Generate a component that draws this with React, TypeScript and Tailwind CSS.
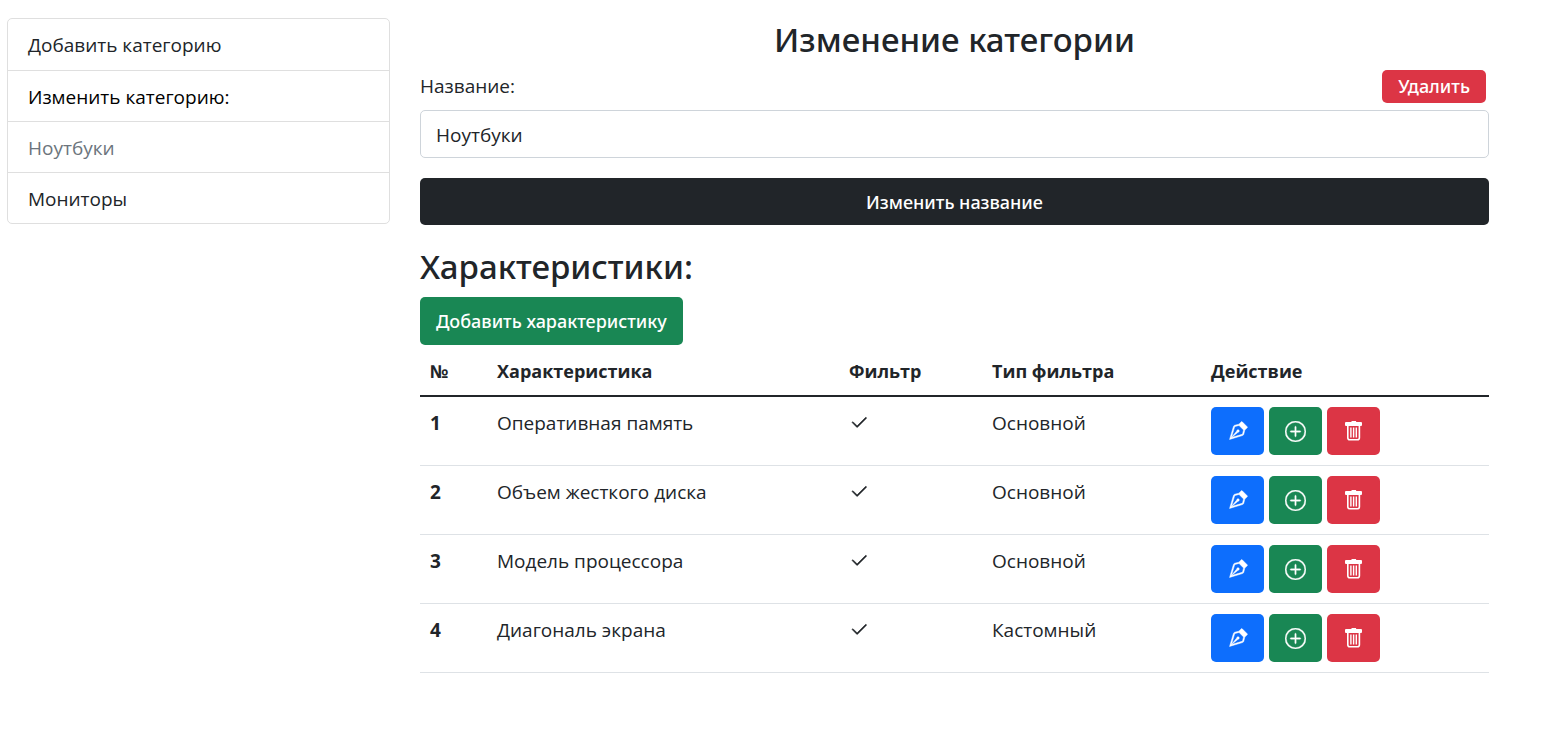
import { BsCheck2, BsPlusCircle, BsVectorPen } from "react-icons/bs";

const rows = [
  { name: "Оперативная память", type: "Основной" },
  { name: "Объем жесткого диска", type: "Основной" },
  { name: "Модель процессора", type: "Основной" },
  { name: "Диагональ экрана", type: "Кастомный" },
];

function TrashIcon() {
  return (
    <svg width="20" height="20" viewBox="0 0 20 20" fill="none" stroke="currentColor" aria-hidden="true">
      <path d="M7.5 .8h4.6" strokeWidth="1.6" />
      <rect x="1" y="1" width="17" height="4" rx="1" fill="currentColor" stroke="none" />
      <path d="M3.8 4.5v12.2a2 2 0 0 0 2 2h7.6a2 2 0 0 0 2-2V4.5" strokeWidth="1.6" />
      <path d="M6.9 6.5v10M9.6 6.5v10M12.3 6.5v10" strokeWidth="1.4" />
    </svg>
  );
}

export default function App() {
  return (
    <div className="flex items-start gap-[30px] bg-white pt-[18px] pr-[78px] pl-[7px] font-['Open_Sans','Noto_Sans',sans-serif] text-[19px] leading-[30px] text-[#212529]">
      <nav className="w-[383px] shrink-0 divide-y divide-[#dfdfdf] rounded-[5px] border border-[#dfdfdf]">
        <a href="#add" className="block px-5 pt-[11px] pb-[10px]">Добавить категорию</a>
        <div className="px-5 pt-[11px] pb-[9px] text-black">Изменить категорию:</div>
        <a href="#laptops" aria-current="page" className="block px-5 pt-[11px] pb-[9px] text-[#6c757d]">Ноутбуки</a>
        <a href="#monitors" className="block px-5 pt-[11px] pb-[9px]">Мониторы</a>
      </nav>

      <main className="min-w-0 flex-1">
        <h2 className="text-center font-['Noto_Sans','Open_Sans',sans-serif] text-[33px] leading-[44px] font-medium">Изменение категории</h2>
        <form onSubmit={(e) => e.preventDefault()}>
          <div className="flex items-start justify-between pt-2 pr-[3px]">
            <label htmlFor="name" className="leading-8">Название:</label>
            <button type="button" className="h-[33px] rounded-[5px] bg-[#dc3545] px-4 font-['Noto_Sans','Open_Sans',sans-serif] text-lg leading-[33px] font-medium text-white">Удалить</button>
          </div>
          <input
            id="name"
            type="text"
            defaultValue="Ноутбуки"
            className="mt-[7px] block h-12 w-full rounded-[5px] border border-[#ced4da] px-[15px] pt-px"
          />
          <button type="submit" className="mt-5 block h-[47px] w-full rounded-[5px] bg-[#212529] font-['Noto_Sans','Open_Sans',sans-serif] text-lg font-medium text-white">
            Изменить название
          </button>
        </form>

        <h2 className="mt-5 font-['Noto_Sans','Open_Sans',sans-serif] text-[33px] leading-[44px] font-medium">Характеристики:</h2>
        <button type="button" className="mt-2 block h-12 rounded-[5px] bg-[#198754] px-4 font-['Noto_Sans','Open_Sans',sans-serif] text-lg font-medium text-white">
          Добавить характеристику
        </button>

        <table className="w-full table-fixed border-collapse text-left">
          <colgroup>
            <col className="w-[67px]" />
            <col className="w-[352px]" />
            <col className="w-[143px]" />
            <col className="w-[219px]" />
            <col />
          </colgroup>
          <thead className="text-lg leading-[30px]">
            <tr className="border-b-2 border-[#212529]">
              <th scope="col" className="px-[10px] pt-[11px] pb-[9px] font-bold">№</th>
              <th scope="col" className="px-[10px] pt-[11px] pb-[9px] font-bold">Характеристика</th>
              <th scope="col" className="px-[10px] pt-[11px] pb-[9px] font-bold">Фильтр</th>
              <th scope="col" className="px-[10px] pt-[11px] pb-[9px] font-bold">Тип фильтра</th>
              <th scope="col" className="px-[10px] pt-[11px] pb-[9px] font-bold">Действие</th>
            </tr>
          </thead>
          <tbody>
            {rows.map((row, i) => (
              <tr key={row.name} className="border-b border-[#dee2e6] align-top">
                <th scope="row" className="px-[10px] pt-[11px] font-bold">{i + 1}</th>
                <td className="px-[10px] pt-[11px]">{row.name}</td>
                <td className="px-[10px] py-4">
                  <BsCheck2 size={20} strokeWidth="0.4" role="img" aria-label="Да" />
                </td>
                <td className="px-[10px] pt-[11px]">{row.type}</td>
                <td className="p-[10px]">
                  <div className="flex gap-[5px]">
                    <button type="button" aria-label="Изменить" className="flex h-12 w-[53px] items-center justify-center rounded-[5px] bg-[#0d6efd] text-white">
                      <BsVectorPen size={20} strokeWidth="0.4" />
                    </button>
                    <button type="button" aria-label="Добавить" className="flex h-12 w-[53px] items-center justify-center rounded-[5px] bg-[#198754] text-white">
                      <BsPlusCircle size={21} strokeWidth="0.3" />
                    </button>
                    <button type="button" aria-label="Удалить" className="flex h-12 w-[53px] items-center justify-center rounded-[5px] bg-[#dc3545] text-white">
                      <TrashIcon />
                    </button>
                  </div>
                </td>
              </tr>
            ))}
          </tbody>
        </table>
      </main>
    </div>
  );
}
